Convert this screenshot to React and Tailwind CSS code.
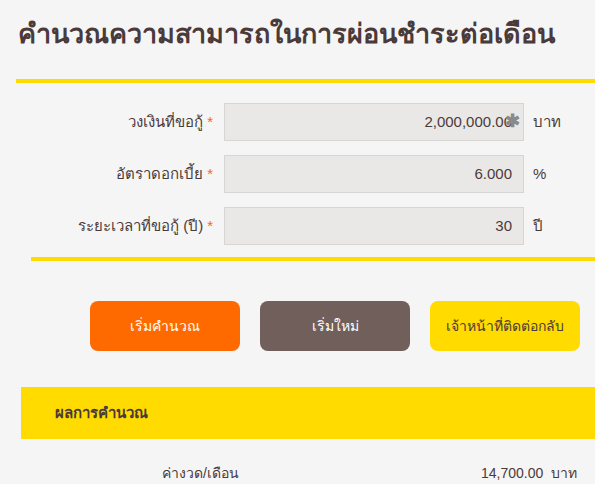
const FIELDS = [
  { label: "วงเงินที่ขอกู้", value: "2,000,000.00", unit: "บาท", clear: true },
  { label: "อัตราดอกเบี้ย", value: "6.000", unit: "%" },
  { label: "ระยะเวลาที่ขอกู้ (ปี)", value: "30", unit: "ปี" },
];

const font = { fontFamily: "'Liberation Sans', 'Noto Sans', sans-serif" };

function FieldRow({ field }) {
  return (
    <div className="flex items-center h-[38px]">
      <div className="w-[213px] text-right text-[15px] text-[#4a3a3a]">
        {field.label}
        <span className="text-[#ff6a00] ml-1">*</span>
      </div>
      <div className="relative ml-[11px] w-[300px] h-[38px] bg-[#eae8e6] border border-[#d8d4d2] flex items-center justify-end pr-[11px] text-[15px] text-[#4a3a3a]">
        {field.value}
        {field.clear && (
          <span className="absolute right-[3px] top-[8px] text-[18px] leading-none text-[#8a8a8a] font-bold">
            ✱
          </span>
        )}
      </div>
      <div className="ml-[9px] text-[15px] text-[#4a3a3a]">{field.unit}</div>
    </div>
  );
}

export default function App() {
  return (
    <div className="w-[595px] h-[484px] overflow-hidden bg-[#f5f5f5]" style={font}>
      {/* title */}
      <h1 className="pl-[18px] pt-[14px] text-[27px] leading-[40px] font-bold text-[#4a3a3a]">
        คำนวณความสามารถในการผ่อนชำระต่อเดือน
      </h1>
      <div className="ml-[16px] mt-[25px] h-[4px] bg-[#ffdb00]" />

      {/* form */}
      <div className="mt-[20px] flex flex-col gap-[14px]">
        {FIELDS.map((f) => (
          <FieldRow key={f.label} field={f} />
        ))}
      </div>
      <div className="ml-[31px] mt-[12px] h-[4px] bg-[#ffdb00]" />

      {/* buttons */}
      <div className="mt-[40px] pl-[90px] flex gap-[20px]">
        <button className="w-[150px] h-[50px] rounded-lg bg-[#ff6a00] text-white text-[14px]">
          เริ่มคำนวณ
        </button>
        <button className="w-[150px] h-[50px] rounded-lg bg-[#715f5c] text-white text-[14px]">
          เริ่มใหม่
        </button>
        <button className="w-[150px] h-[50px] rounded-lg bg-[#ffdb00] text-[#4a3a3a] text-[14px]">
          เจ้าหน้าที่ติดต่อกลับ
        </button>
      </div>

      {/* result */}
      <div className="ml-[21px] mt-[36px] h-[52px] bg-[#ffdb00] flex items-center pl-[34px] text-[15px] font-bold text-[#4a3a3a]">
        ผลการคำนวณ
      </div>
      <div className="mt-[24px] flex items-center text-[14px] text-[#4a3a3a]">
        <div className="ml-[162px]">ค่างวด/เดือน</div>
        <div className="ml-auto mr-[18px]">14,700.00&nbsp;&nbsp;บาท</div>
      </div>
    </div>
  );
}
